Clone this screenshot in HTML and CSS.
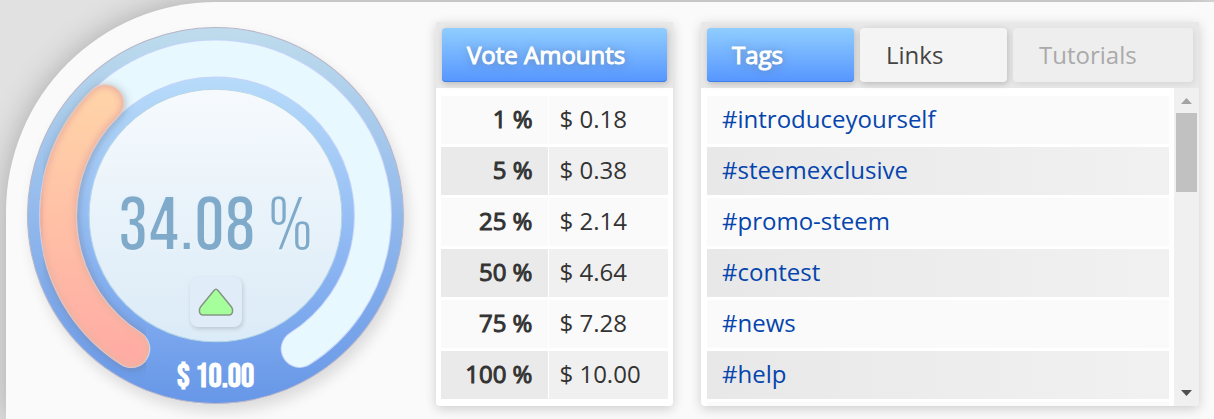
FILE: index.html
```html
<!DOCTYPE html>
<html lang="en">
<head>
    <meta charset="UTF-8">
    <meta name="viewport" content="width=device-width, initial-scale=1.0">
    <title>Voting Power</title>
    <link rel="stylesheet" href="styles.css">
</head>
<body>

    <main class="dashboard">
        <div class="gauge">
            <svg class="dial" viewBox="0 0 376 376" aria-hidden="true">
                <defs>
                    <linearGradient id="rim" x1="0" y1="0" x2="0" y2="1">
                        <stop offset="0" stop-color="#bedcec"/>
                        <stop offset="0.5" stop-color="#92b9ec"/>
                        <stop offset="1" stop-color="#6797e8"/>
                    </linearGradient>
                    <linearGradient id="ring" x1="0" y1="0" x2="0" y2="1">
                        <stop offset="0" stop-color="#bcdffa"/>
                        <stop offset="0.5" stop-color="#97bff5"/>
                        <stop offset="1" stop-color="#6f9dea"/>
                    </linearGradient>
                    <linearGradient id="face" x1="0" y1="0" x2="0" y2="1">
                        <stop offset="0" stop-color="#f6fafd"/>
                        <stop offset="1" stop-color="#dbebf7"/>
                    </linearGradient>
                    <linearGradient id="power" gradientUnits="userSpaceOnUse" x1="0" y1="70" x2="0" y2="340">
                        <stop offset="0" stop-color="#ffd3a8"/>
                        <stop offset="1" stop-color="#ffaaa4"/>
                    </linearGradient>
                    <filter id="soft" x="-20%" y="-20%" width="140%" height="140%">
                        <feDropShadow dx="1" dy="1" stdDeviation="4" flood-color="#456" flood-opacity="0.4"/>
                    </filter>
                    <filter id="blur" x="-20%" y="-20%" width="140%" height="140%">
                        <feGaussianBlur stdDeviation="3"/>
                    </filter>
                </defs>
                <circle cx="188" cy="188" r="187.500" fill="url(#rim)" stroke="#b9b5c8"/>
                <circle cx="188" cy="188" r="157" fill="url(#ring)"/>
                <!-- track -->
                <path d="M104 321A157 157 0 1 1 272 321" fill="none" stroke="#c6d3fa" stroke-width="38" stroke-linecap="round"/>
                <path d="M104 321A157 157 0 1 1 272 321" fill="none" stroke="#e8f8ff" stroke-width="36" stroke-linecap="round"/>
                <!-- used part -->
                <path d="M104 321A157 157 0 0 1 78 76" fill="none" stroke="#d8ccd0" stroke-width="38" stroke-linecap="round" filter="url(#soft)"/>
                <path d="M104 321A157 157 0 0 1 78 76" fill="none" stroke="#efb29f" stroke-width="36" stroke-linecap="round"/>
                <path d="M104 321A157 157 0 0 1 78 76" fill="none" stroke="url(#power)" stroke-width="31" stroke-linecap="round" filter="url(#blur)"/>
                <circle cx="188" cy="188" r="126" fill="url(#face)" stroke="#b4d5e8"/>
            </svg>
            <div class="readout">
                <span class="percent">34.08 %</span>
                <button type="button" class="trend" aria-label="Rising">
                    <svg width="36" height="28" viewBox="0 0 36 28" aria-hidden="true">
                        <path d="M16 2.500Q18 0 20 2.500L33.500 19Q35 21 34.500 24Q34 27 31 27H5Q2 27 1.500 24Q1 21 2.500 19Z" fill="#a5ff9b" stroke="#849684" stroke-width="1.500"/>
                    </svg>
                </button>
                <span class="value">$ 10.00</span>
            </div>
        </div>

        <section class="panel amounts">
            <div class="tabs">
                <button type="button" class="tab active">Vote Amounts</button>
            </div>
            <table>
                <tr><th scope="row">1 %</th><td>$ 0.18</td></tr>
                <tr><th scope="row">5 %</th><td>$ 0.38</td></tr>
                <tr><th scope="row">25 %</th><td>$ 2.14</td></tr>
                <tr><th scope="row">50 %</th><td>$ 4.64</td></tr>
                <tr><th scope="row">75 %</th><td>$ 7.28</td></tr>
                <tr><th scope="row">100 %</th><td>$ 10.00</td></tr>
            </table>
        </section>

        <section class="panel topics">
            <div class="tabs">
                <button type="button" class="tab active">Tags</button>
                <button type="button" class="tab">Links</button>
                <button type="button" class="tab wide" disabled>Tutorials</button>
            </div>
            <div class="list-box">
                <ul class="tag-list">
                    <li><a href="#introduceyourself">#introduceyourself</a></li>
                    <li><a href="#steemexclusive">#steemexclusive</a></li>
                    <li><a href="#promo-steem">#promo-steem</a></li>
                    <li><a href="#contest">#contest</a></li>
                    <li><a href="#news">#news</a></li>
                    <li><a href="#help">#help</a></li>
                    <li></li>
                </ul>
                <div class="scrollbar" aria-hidden="true">
                    <svg width="11" height="6" viewBox="0 0 11 6"><path d="M5.500 0L11 6H0Z" fill="#a3a3a3"/></svg>
                    <div class="thumb"></div>
                    <svg width="11" height="6" viewBox="0 0 11 6"><path d="M0 0H11L5.500 6Z" fill="#505050"/></svg>
                </div>
            </div>
        </section>
    </main>

</body>
</html>
```
FILE: styles.css
```css
* {
    box-sizing: border-box;
}
body {
    margin: 0;
    padding: 2px 0 0 6px;
    background: #e1e1e1;
    color: #333;
    font-family: "Open Sans", "Noto Sans", sans-serif;
    font-size: 24px;
    overflow: hidden;
}
.dashboard {
    display: flex;
    align-items: flex-start;
    min-height: calc(100vh - 2px);
    padding: 20px 15px 0 21px;
    background: #fafafa;
    border-top-left-radius: 210px;
    box-shadow: 0 0 30px rgba(0, 0, 0, 0.25);
}

/* gauge */
.gauge {
    display: grid;
    flex: none;
    width: 377px;
    height: 377px;
    margin: 5px 32px 0 0;
    border-radius: 50%;
    box-shadow: 4px 8px 14px rgba(0, 0, 0, 0.12);
}
.dial, .readout {
    grid-area: 1 / 1;
}
.readout {
    display: flex;
    flex-direction: column;
    align-items: center;
    padding-top: 160px;
    font-family: "Bebas Neue", "Liberation Sans Narrow", "Roboto Condensed", sans-serif;
}
.percent {
    font-size: 77px;
    line-height: 80px;
    color: #80aac9;
    /* face-coloured outline keeps the digits light */
    -webkit-text-stroke: 2px #e7f2fa;
}
.trend {
    display: flex;
    align-items: center;
    justify-content: center;
    width: 52px;
    height: 50px;
    margin-top: 10px;
    padding: 0;
    border: none;
    border-radius: 8px;
    background: #e0edf8;
    box-shadow: 1px 2px 4px rgba(0, 0, 0, 0.15);
    cursor: pointer;
}
.value {
    margin-top: 32px;
    font-size: 33px;
    font-weight: bold;
    line-height: 36px;
    color: white;
}

/* panels */
.panel {
    background: white;
    border-radius: 0 0 4px 4px;
    box-shadow: 0 3px 12px rgba(0, 0, 0, 0.18);
    overflow: hidden;
}
.amounts {
    flex: none;
    width: 237px;
    margin-right: 28px;
}
.topics {
    flex: 1;
}
.tabs {
    display: flex;
    gap: 6px;
    padding: 6px;
    background: #e8e8e8;
}
.tab {
    width: 147px;
    height: 54px;
    padding: 0 26px 2px;
    border: none;
    border-radius: 4px;
    background: #f4f4f4;
    box-shadow: 1px 2px 6px rgba(0, 0, 0, 0.2);
    color: #444;
    font-family: inherit;
    font-size: 24px;
    text-align: left;
    white-space: nowrap;
    cursor: pointer;
}
.tab.active {
    padding-left: 25px;
    background: linear-gradient(#90cdff, #5696ff);
    box-shadow: 1px 2px 6px rgba(0, 0, 0, 0.2), inset 0 -1px #3f7fe8;
    color: white;
    -webkit-text-stroke: 1px white;
    text-shadow: 1px 1px 8px rgba(90, 90, 90, 0.6);
}
.amounts .tab, .tab.wide {
    flex: 1;
}
.tab:disabled {
    background: #eee;
    box-shadow: 1px 2px 6px rgba(0, 0, 0, 0.08);
    color: #aaa;
    cursor: default;
}

/* vote amounts */
table {
    width: 100%;
    padding: 5px 4px 4px;
    border-spacing: 1px 3px;
}
th, td {
    height: 48px;
    padding: 0 10px 2px;
    background: #fafafa;
    line-height: 32px;
}
th {
    width: 107px;
    padding-right: 16px;
    font-weight: normal;
    text-align: right;
    -webkit-text-stroke: 1px #333;
}
td {
    width: 118px;
}
tr:nth-child(even) th {
    background: #eaeaea;
}
tr:nth-child(even) td {
    background: #f0f0f0;
}

/* tags */
.list-box {
    display: flex;
    height: 318px;
    overflow: hidden;
}
.tag-list {
    flex: 1;
    margin: 0;
    padding: 8px 5px 0 6px;
    list-style-type: none;
}
.tag-list li {
    height: 48px;
    margin-bottom: 3px;
    padding: 0 15px;
    background: #fafafa;
    line-height: 46px;
}
.tag-list li:nth-child(even) {
    background: linear-gradient(90deg, #e8e8e8, #f1f1f1);
}
.tag-list a {
    color: #0645ad;
    text-decoration: none;
}
.tag-list a:hover {
    text-decoration: underline;
}
.scrollbar {
    display: flex;
    flex-direction: column;
    align-items: center;
    width: 25px;
    padding: 10px 2px;
    background: #f0f0f0;
}
.thumb {
    width: 100%;
    height: 79px;
    margin: 9px 0 auto;
    background: #c1c1c1;
}
```
